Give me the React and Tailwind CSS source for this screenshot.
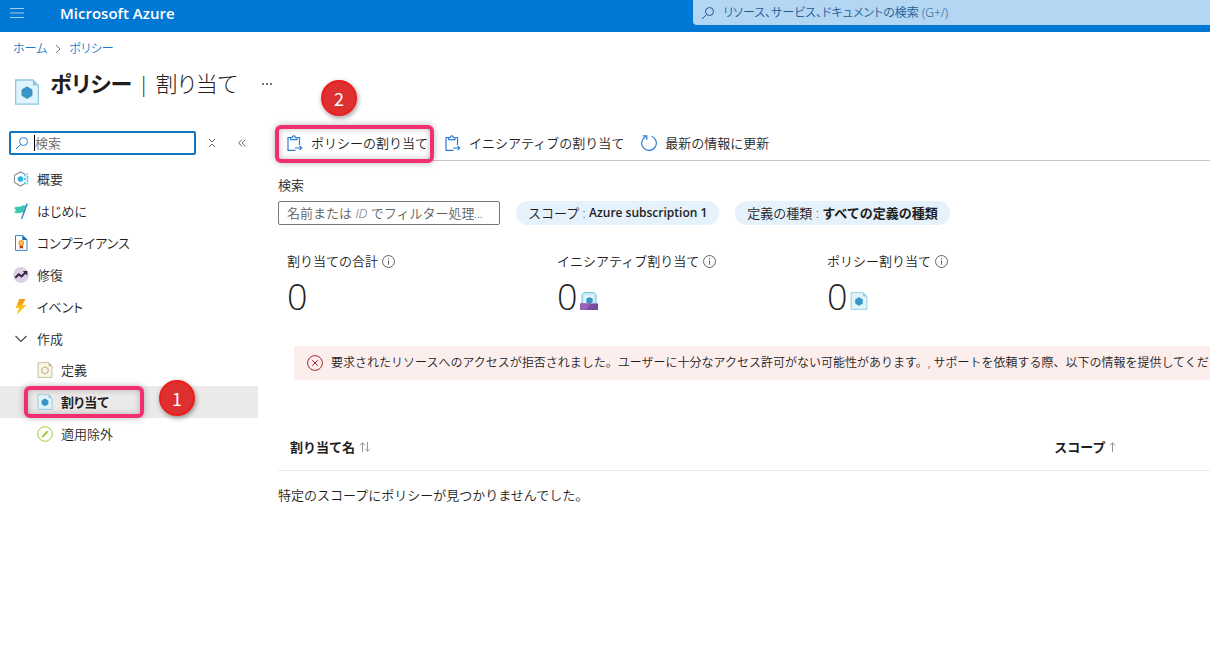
import clsx from 'clsx';

const PROP = "[font-feature-settings:'palt']";

function PolicyIcon({ className, fill = '#e1f3fb', stroke = '#8cc8e0', dot = '#3a96c4', hollow = false }) {
  return (
    <svg viewBox="0 0 16 16" className={className} aria-hidden="true">
      <path d="M1 .6h10.6L15 4v11.4H1z" fill={fill} stroke={stroke} strokeWidth=".8" />
      <path d="M11.6.6V4H15z" fill={stroke} />
      <path
        d="M8 4.8l3.1 1.8v3.6L8 12l-3.1-1.8V6.6z"
        fill={hollow ? 'none' : dot}
        stroke={hollow ? dot : dot}
        strokeWidth={hollow ? 1 : 0.5}
      />
    </svg>
  );
}

function InitiativeIcon({ className }) {
  return (
    <svg viewBox="0 0 18 18" className={className} aria-hidden="true">
      <path d="M4 .5h10l2 2V12H2V2.5z" fill="#c9ebf8" stroke="#6fc3e0" strokeWidth="1" />
      <path d="M4.5 3.5H13V12H4.5z" fill="#e8f8fd" />
      <path d="M9.5 5l3.2 1.8v3.6L9.5 12l-3.2-1.6V6.8z" fill="#3a96c4" />
      <path d="M0 11.500h18V18H0z" fill="#7a4a9c" />
      <path d="M0 11.500h11L6 18H0z" fill="#9a62b4" />
    </svg>
  );
}

function SearchIcon({ className }) {
  return (
    <svg viewBox="0 0 14 14" className={className} fill="none" stroke="currentColor" aria-hidden="true">
      <circle cx="8.5" cy="5.5" r="4" />
      <path d="M5.6 8.4L1 13" />
    </svg>
  );
}

function OverviewIcon() {
  return (
    <svg viewBox="0 0 16 16" className="size-4" aria-hidden="true">
      <path d="M12 3.2L7.5.9 1.5 4.3v7.2L7.5 15l4.5-2.4" fill="none" stroke="#8c8f92" strokeWidth="1.1" />
      <circle cx="7.5" cy="8" r="2.8" fill="#32b0dd" />
      <path
        d="M11 3.5h1.8v1.8H11zM13.5 5h1.8v1.8h-1.8zM11 7.1h1.8v1.8H11zM13.5 9.2h1.8V11h-1.8zM11 10.9h1.8v1.8H11zM13.5 2.4H15v1.5h-1.5zM13.5 12H15v1.5h-1.5zM13.8 7.3h1.5v1.5h-1.5z"
        fill="#45c8ec"
      />
    </svg>
  );
}

function FlagIcon() {
  return (
    <svg viewBox="0 0 16 16" className="size-4" aria-hidden="true">
      <path d="M3.5 3.5C6 5 8.5 1.6 12.5 2.2L10.6 9.5C7.5 9 5 11.5 1 9.3l2.2-2.1L1 5z" fill="#3cc7b0" />
      <path d="M13.4.4l1.4.5L9.3 16H8z" fill="#2f78b8" />
    </svg>
  );
}

function ComplianceIcon() {
  return (
    <svg viewBox="0 0 16 16" className="size-4" aria-hidden="true">
      <path d="M2.5.6h7.3l4.2 4v10.8H2.5z" fill="#fff" stroke="#2f86d0" strokeWidth="1" />
      <path d="M9.3.3V5h5.1z" fill="#1b6cb8" />
      <path d="M6.6 9H10v5l-1.7-1.2L6.6 14z" fill="#c8341f" />
      <circle cx="8.3" cy="8" r="2.9" fill="#f4a22d" />
      <circle cx="8.3" cy="8" r="1.3" fill="#fbd27a" />
    </svg>
  );
}

function RemediationIcon() {
  return (
    <svg viewBox="0 0 16 16" className="size-4" aria-hidden="true">
      <circle cx="8" cy="8" r="7.9" fill="#dcd0e4" />
      <path d="M2.3 10.7l3.5-3.4 2.7 2.2 4-4" fill="none" stroke="#33203f" strokeWidth="1.9" />
      <path d="M9.8 4h4.5v4.5z" fill="#33203f" />
    </svg>
  );
}

function EventIcon() {
  return (
    <svg viewBox="0 0 16 16" className="size-4" aria-hidden="true">
      <path d="M6.5 0h6L9 6h4.5l-10 10 2.7-7H2.5z" fill="#fcc21b" />
      <path d="M6.5 0h6L9 6H4.2z" fill="#f59d1c" />
    </svg>
  );
}

function ExemptionIcon() {
  return (
    <svg viewBox="0 0 16 16" className="size-4" aria-hidden="true">
      <circle cx="8" cy="8" r="7.3" fill="#fff" stroke="#a4cc3a" strokeWidth="1" />
      <path d="M4.600 11.600l.6-2L10 4.600l1.500 1.500-4.900 4.900z" fill="#a4cc3a" />
    </svg>
  );
}

function AssignIcon() {
  return (
    <svg viewBox="0 0 16 16" className="size-4 shrink-0" fill="none" stroke="#2b7cd3" strokeWidth="1.2" aria-hidden="true">
      <path d="M10.5 2.5h2V10M3 2.5H1v12.900h7.500" />
      <path d="M3.500 4.700V2.500h1.700C5.200.200 8.300.200 8.300 2.500H10v2.200z" />
      <path d="M8 13h6.500M12.500 10.800l2.200 2.200-2.200 2.200" />
    </svg>
  );
}

function RefreshIcon() {
  return (
    <svg viewBox="0 0 16 16" className="size-4 shrink-0" fill="none" stroke="#2b7cd3" strokeWidth="1.2" aria-hidden="true">
      <path d="M10.5 1.2A7.3 7.3 0 1 1 4.6 1.6" />
      <path d="M1.8.9h4v4" />
    </svg>
  );
}

function InfoIcon() {
  return (
    <svg viewBox="0 0 12 12" className="size-[13px]" fill="none" stroke="#4a4a4a" strokeWidth=".8" aria-hidden="true">
      <circle cx="6" cy="6" r="5.5" />
      <path d="M6 5v4M6 2.9V4" />
    </svg>
  );
}

function SortIcon({ both = false }) {
  return (
    <svg viewBox="0 0 12 10" className="h-2.5 w-3" fill="none" stroke="#8a8886" strokeWidth=".9" aria-hidden="true">
      <path d="M3.500 10V.800M1 3.300L3.500.800 6 3.300" />
      {both && <path d="M8.500 0v9.200M6 6.700l2.500 2.500L11 6.700" />}
    </svg>
  );
}

function Highlight({ className }) {
  return (
    <span
      className={clsx(
        'pointer-events-none absolute rounded-md border-4 border-[#f22f6e] shadow-[0_0_6px_rgba(0,0,0,0.3),inset_0_0_6px_rgba(0,0,0,0.25)]',
        className
      )}
    />
  );
}

function StepBadge({ children, className }) {
  return (
    <span
      className={clsx(
        'absolute flex size-9 items-center justify-center rounded-full border-2 border-[#f01c1c] bg-[#de2f31] text-lg leading-none text-white shadow-[1px_2px_5px_rgba(0,0,0,0.4)]',
        "font-['Noto_Sans_CJK_JP',sans-serif] font-normal",
        className
      )}
    >
      {children}
    </span>
  );
}

const navItems = [
  { label: '概要', icon: <OverviewIcon /> },
  { label: 'はじめに', icon: <FlagIcon /> },
  { label: 'コンプライアンス', icon: <ComplianceIcon /> },
  { label: '修復', icon: <RemediationIcon /> },
  { label: 'イベント', icon: <EventIcon /> },
];

const authoringItems = [
  {
    label: '定義',
    icon: <PolicyIcon className="size-4" fill="#fbf6e3" stroke="#b9b193" dot="#b3aa8a" hollow />,
  },
  { label: '割り当て', icon: <PolicyIcon className="size-4" />, selected: true },
  { label: '適用除外', icon: <ExemptionIcon /> },
];

const stats = [
  { label: '割り当ての合計', value: 0 },
  { label: 'イニシアティブ割り当て', value: 0, icon: <InitiativeIcon className="size-[18px]" /> },
  { label: 'ポリシー割り当て', value: 0, icon: <PolicyIcon className="size-[18px]" /> },
];

function Header() {
  return (
    <header className="flex h-8 items-start bg-[#0078d4]">
      <div className="flex h-[25px] w-[57.3%] items-center">
        <button type="button" aria-label="メニュー" className="ml-2.5 text-[#9fd0f5]">
          <svg viewBox="0 0 14 12" className="h-3 w-3.5" stroke="currentColor" strokeWidth="1.2">
            <path d="M0 1.500h14M0 6h14M0 10.500h14" />
          </svg>
        </button>
        <a href="#" className="ml-9 text-[15px] font-semibold text-white">
          Microsoft Azure
        </a>
      </div>
      <label className="flex h-[25px] flex-1 items-center gap-2 rounded-bl-sm bg-[#b3d6f2] pl-2 text-[#1c5a92]">
        <SearchIcon className="size-3.5 shrink-0" />
        <input
          type="text"
          aria-label="リソース、サービス、ドキュメントの検索"
          placeholder="リソース、サービス、ドキュメントの検索 (G+/)"
          className={clsx('min-w-0 flex-1 bg-transparent text-xs outline-none placeholder:text-[#1c5a92]', PROP)}
        />
      </label>
    </header>
  );
}

function Sidebar() {
  return (
    <aside className="w-[258px] shrink-0 pt-1.5">
      <div className="flex items-center pl-[9px]">
        <label className="relative flex h-6 w-[187px] items-center rounded-xs border-2 border-[#1174c0] pl-1">
          <SearchIcon className="size-3.5 shrink-0 text-[#2b7cd3]" />
          <span className="absolute top-0.5 left-[23px] h-4 w-px bg-black" />
          <input
            type="text"
            aria-label="検索"
            placeholder="検索"
            className="ml-1.5 min-w-0 flex-1 bg-transparent text-[13px] outline-none placeholder:text-[#6b6966]"
          />
        </label>
        <button type="button" aria-label="すべて展開" className="ml-3 text-[#555]">
          <svg viewBox="0 0 8 10" className="h-2.5 w-2" fill="none" stroke="currentColor" strokeWidth=".9">
            <path d="M1 1l3 3 3-3M1 9l3-3 3 3" />
          </svg>
        </button>
        <button type="button" aria-label="折りたたむ" className="ml-[22px] text-[#555]">
          <svg viewBox="0 0 8 8" className="size-2" fill="none" stroke="currentColor" strokeWidth=".9">
            <path d="M4 .5L.6 4 4 7.500M7.600.5L4.200 4l3.400 3.500" />
          </svg>
        </button>
      </div>
      <nav className={clsx('mt-2', PROP)}>
        <ul>
          {navItems.map((item) => (
            <li key={item.label}>
              <a href="#" className="flex h-8 items-center gap-2 pl-[13px]">
                {item.icon}
                {item.label}
              </a>
            </li>
          ))}
          <li>
            <button type="button" aria-expanded="true" className="flex h-[31px] w-full items-center gap-2 pl-[13px]">
              <svg viewBox="0 0 16 16" className="size-4" fill="none" stroke="#444" strokeWidth="1.1">
                <path d="M2.500 5L8 10.500 13.500 5" />
              </svg>
              作成
            </button>
            <ul>
              {authoringItems.map((item) => (
                <li key={item.label} className="relative">
                  <a
                    href="#"
                    className={clsx(
                      'flex h-8 items-center gap-2 pl-[37px]',
                      item.selected && 'bg-[#ebeae9] font-semibold'
                    )}
                  >
                    {item.icon}
                    {item.label}
                  </a>
                  {item.selected && (
                    <>
                      <Highlight className="inset-y-0 left-6 w-[120px]" />
                      <StepBadge className="-top-1.5 left-[159px]">1</StepBadge>
                    </>
                  )}
                </li>
              ))}
            </ul>
          </li>
        </ul>
      </nav>
    </aside>
  );
}

function Toolbar() {
  return (
    <div className="flex h-9 items-center gap-[17px] border-b border-[#c8c6c4] pl-[9px] whitespace-nowrap">
      <button type="button" className="relative flex h-6 items-center gap-2">
        <AssignIcon />
        ポリシーの割り当て
        <Highlight className="-top-1.5 -right-1.5 -bottom-2 -left-3" />
        <StepBadge className="-top-[51px] left-[34px]">2</StepBadge>
      </button>
      <button type="button" className="flex h-6 items-center gap-2">
        <AssignIcon />
        イニシアティブの割り当て
      </button>
      <button type="button" className="flex h-6 items-center gap-2">
        <RefreshIcon />
        最新の情報に更新
      </button>
    </div>
  );
}

export default function App() {
  return (
    <div className="min-h-screen overflow-x-hidden bg-white font-['Open_Sans','Noto_Sans_CJK_JP',sans-serif] text-[13px] leading-5 font-[350] text-[#1f1e1d]">
      <Header />
      <nav
        aria-label="階層リンク"
        className={clsx('flex h-[34px] items-center gap-2 pl-[13px] text-xs text-[#1a7bc8]', PROP)}
      >
        <a href="#">ホーム</a>
        <svg viewBox="0 0 6 10" className="h-2.5 w-1.5" fill="none" stroke="#666" strokeWidth=".9">
          <path d="M1 1l4 4-4 4" />
        </svg>
        <a href="#">ポリシー</a>
      </nav>
      <div className="flex h-[59px] items-start pl-3.5">
        <PolicyIcon className="mt-3 h-7 w-[26px]" />
        <h1 className={clsx('ml-2.5 text-[22px] leading-[34px] font-light whitespace-pre', PROP)}>
          <span className="font-semibold">ポリシー</span> | 割り当て
        </h1>
        <button type="button" aria-label="その他" className="ml-6 flex h-9 items-center gap-0.5">
          <span className="size-0.5 bg-[#777]" />
          <span className="size-0.5 bg-[#777]" />
          <span className="size-0.5 bg-[#777]" />
        </button>
      </div>

      <div className="flex">
        <Sidebar />
        <main className="min-w-0 flex-1 pl-5">
          <Toolbar />

          <label htmlFor="filter" className="mt-3.5 block">
            検索
          </label>
          <div className="mt-1.5 flex gap-4 whitespace-nowrap">
            <input
              id="filter"
              type="text"
              placeholder="名前または ID でフィルター処理..."
              className="h-6 w-[222px] rounded-xs border border-[#7a7876] px-2 outline-none placeholder:text-[#605e5c] placeholder:italic [font-synthesis:none]"
            />
            <button type="button" className="flex h-6 items-center rounded-full bg-[#e5f1fb] px-3">
              スコープ :&nbsp;<span className="text-xs font-semibold">Azure subscription 1</span>
            </button>
            <button type="button" className="flex h-6 items-center rounded-full bg-[#e5f1fb] px-3">
              定義の種類 :&nbsp;<span className="font-semibold">すべての定義の種類</span>
            </button>
          </div>

          <dl className="mt-[26px] flex pl-[9px]">
            {stats.map((stat) => (
              <div key={stat.label} className="w-[270px]">
                <dt className="flex items-center gap-1">
                  {stat.label}
                  <InfoIcon />
                </dt>
                <dd className="mt-1.5 flex h-10 items-center gap-0.5 text-4xl">
                  {stat.value}
                  <span className="pt-2">{stat.icon}</span>
                </dd>
              </div>
            ))}
          </dl>

          <div
            role="alert"
            className="mt-[29px] ml-4 flex h-[34px] items-center gap-2 overflow-hidden bg-[#fdeeee] pl-[13px] text-xs whitespace-nowrap"
          >
            <svg viewBox="0 0 16 16" className="size-4 shrink-0" fill="none" stroke="#a4262c" strokeWidth="1">
              <circle cx="8" cy="8" r="7.4" />
              <path d="M5.200 5.200l5.600 5.600M10.800 5.200l-5.600 5.600" />
            </svg>
            要求されたリソースへのアクセスが拒否されました。ユーザーに十分なアクセス許可がない可能性があります。,
            サポートを依頼する際、以下の情報を提供してくだ
          </div>

          <table className="mt-11 w-full table-fixed text-left">
            <thead>
              <tr className="h-[46px] border-b border-[#edebe9]">
                <th className="w-[82%] pl-3 font-semibold">
                  <span className="flex items-center gap-1">
                    割り当て名
                    <SortIcon both />
                  </span>
                </th>
                <th className="pl-3 font-semibold">
                  <span className="flex items-center gap-1">
                    スコープ
                    <SortIcon />
                  </span>
                </th>
              </tr>
            </thead>
            <tbody>
              <tr className="h-[50px]">
                <td colSpan={2}>特定のスコープにポリシーが見つかりませんでした。</td>
              </tr>
            </tbody>
          </table>
        </main>
      </div>
    </div>
  );
}
